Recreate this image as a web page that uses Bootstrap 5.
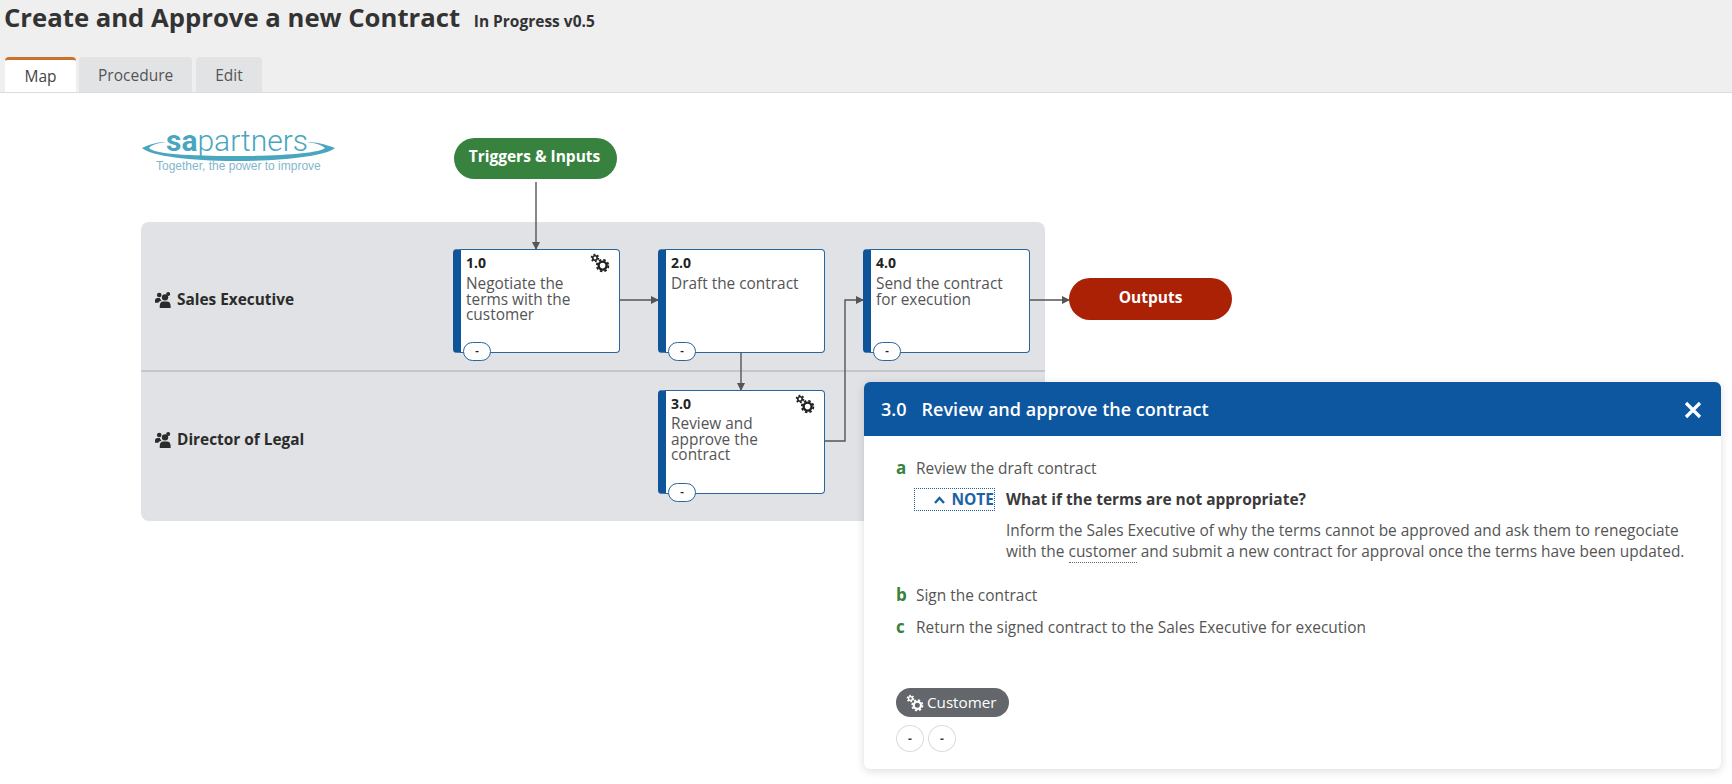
<!DOCTYPE html>
<html lang="en">
<head>
    <meta charset="UTF-8">
    <meta name="viewport" content="width=device-width, initial-scale=1.0">
    <title>Create and Approve a new Contract</title>
    <link href="https://cdn.jsdelivr.net/npm/bootstrap@5.3.0/dist/css/bootstrap.min.css" rel="stylesheet">
    <style>
        body {
            font-family: "Open Sans", "Liberation Sans", sans-serif;
            color: #333;
            background: #fff;
            overflow: hidden;
        }
        .page-head {
            background: #efefef;
            height: 93px;
            border-bottom: 1px solid #dcdcdc;
            padding: 0 4px;
        }
        .page-title {
            font-size: 25.7px;
            font-weight: 700;
            line-height: 36px;
            margin: 0;
            color: #333;
        }
        .page-title small {
            font-size: 15.5px;
            font-weight: 700;
            line-height: 1;
            margin-left: 7px;
        }
        .map-tabs {
            margin-top: 21px;
            margin-left: 1px;
            gap: 3px;
            border: 0;
        }
        .map-tabs .nav-link {
            height: 35px;
            padding: 6px 19px;
            font-size: 15.5px;
            line-height: 24px;
            color: #555;
            background: #e2e3e5;
            border: 0;
            border-radius: 4px 4px 0 0;
            margin: 0;
        }
        .map-tabs .nav-link.active {
            background: #fff;
            color: #444;
            border-top: 3px solid #c8722c;
            padding: 4px 19.5px 0;
        }
        .map-tabs .nav-link.tab-edit {
            padding: 6px 19px;
            margin-left: 1px;
        }
        .map-canvas {
            position: relative;
            height: 691px;
        }
        .lane-wrap {
            position: absolute;
            left: 141px;
            top: 129px;
            width: 904px;
            height: 299px;
            background: #e0e2e5;
            border-radius: 8px;
        }
        .lane {
            height: 149px;
            padding-left: 14px;
            font-size: 15.4px;
            font-weight: 700;
            color: #2b2b2b;
        }
        .lane-one {
            height: 150px;
            border-bottom: 2px solid #c4c6c9;
            padding-top: 7px;
        }
        .lane-two {
            padding-bottom: 14px;
        }
        .lane-icon {
            width: 19px;
            height: 16px;
            margin-right: 3px;
        }
        .logo-box {
            position: absolute;
            left: 141px;
            top: 30px;
        }
        .logo-box svg {
            display: block;
        }
        .arrows {
            position: absolute;
            left: 0;
            top: 0;
            width: 1300px;
            height: 450px;
        }
        .term {
            position: absolute;
            display: flex;
            align-items: center;
            justify-content: center;
            color: #fff;
            font-size: 15.5px;
            font-weight: 700;
            border-radius: 21px;
        }
        .term-in {
            left: 454px;
            top: 45px;
            width: 163px;
            height: 41px;
            padding: 0 2px 4px 0;
            background: #37823f;
        }
        .term-out {
            left: 1069px;
            top: 185px;
            width: 163px;
            height: 42px;
            padding-bottom: 2px;
            background: #ab2105;
        }
        .step {
            position: absolute;
            width: 167px;
            height: 104px;
            background: #fff;
            border: 1.5px solid #2a659c;
            border-left: 8px solid #0e5499;
            border-radius: 4px;
            padding: 3px 0 0 5px;
            color: #555;
            font-size: 15.4px;
            line-height: 15.6px;
        }
        .step b {
            display: block;
            color: #222;
            font-size: 14px;
            line-height: 20px;
            margin-bottom: 3px;
        }
        .step-1 { left: 453px; top: 156px; }
        .step-2 { left: 658px; top: 156px; }
        .step-3 { left: 658px; top: 297px; }
        .step-3 b { margin-bottom: 2px; }
        .step-4 { left: 863px; top: 156px; }
        .step-gear {
            position: absolute;
            right: 9px;
            top: 3px;
            width: 20px;
            height: 20px;
            color: #1e1e1e;
        }
        .step-pill {
            position: absolute;
            left: 2px;
            bottom: -9px;
            width: 28px;
            height: 19px;
            border: 1.5px solid #2a659c;
            border-radius: 10px;
            background: #fff;
            color: #222;
            font-size: 11px;
            font-weight: 700;
            line-height: 14px;
            text-align: center;
        }
        .detail {
            position: absolute;
            left: 864px;
            top: 289px;
            width: 857px;
            height: 387px;
            border: 0;
            border-radius: 6px;
            box-shadow: 0 2px 10px rgba(0, 0, 0, .14);
        }
        .detail .card-header {
            height: 54px;
            background: #0d56a0;
            color: #fff;
            border: 0;
            border-radius: 6px 6px 0 0;
            padding: 1px 19px 0 17px;
            font-size: 18.05px;
            font-weight: 600;
        }
        .detail .card-header span {
            margin-right: 15px;
        }
        .detail .card-body {
            padding: 21px 32px 0;
            font-size: 15.45px;
            color: #555;
        }
        .act-row {
            line-height: 22px;
        }
        .act-row b {
            width: 20px;
            flex: none;
            color: #37823f;
            font-size: 17px;
            font-weight: 700;
        }
        .act-second {
            margin-top: 22px;
        }
        .act-third {
            margin-top: 10px;
        }
        .note-row {
            margin: 9px 0 0 18px;
        }
        .note-tag {
            width: 81px;
            height: 23px;
            border: 1px dotted #235f97;
            color: #1d61a5;
            font-size: 15.5px;
            font-weight: 700;
            line-height: 21px;
            text-align: right;
            white-space: nowrap;
            flex: none;
        }
        .note-tag svg {
            margin-right: 2px;
            vertical-align: 1px;
        }
        .note-text {
            margin-left: 11px;
        }
        .note-text h6 {
            margin: 0 0 9px;
            font-size: 15.5px;
            font-weight: 700;
            line-height: 23px;
            color: #3a3a3a;
        }
        .note-text p {
            margin: 0;
            line-height: 21px;
        }
        .term-link {
            border-bottom: 1px dotted #666;
        }
        .sys-pill {
            width: 113px;
            height: 29px;
            margin-top: 50px;
            background: #63666a;
            color: #fff;
            font-size: 15.2px;
            font-weight: 400;
            padding: 0 0 0 10px;
        }
        .sys-pill svg {
            width: 18px;
            height: 18px;
            margin-right: 3px;
        }
        .mini-pill {
            width: 28px;
            height: 27px;
            border: 1px solid #dcdcdc;
            border-radius: 50%;
            font-size: 12px;
            font-weight: 700;
            line-height: 24px;
            text-align: center;
            background: #fff;
            color: #444;
            padding: 0;
        }
    </style>
</head>
<body>
    <svg width="0" height="0" class="position-absolute">
        <defs>
            <symbol id="gears" viewBox="0 0 20 20">
                <g fill="none" stroke="currentColor">
                    <circle cx="12.600" cy="12.600" r="4" stroke-width="2.400"/>
                    <circle cx="12.600" cy="12.600" r="5.800" stroke-width="1.800" stroke-dasharray="2.500 2.055"/>
                    <circle cx="5" cy="5" r="2.200" stroke-width="1.600"/>
                    <circle cx="5" cy="5" r="3.500" stroke-width="1.600" stroke-dasharray="1.800 1.860"/>
                </g>
            </symbol>
            <symbol id="people" viewBox="0 0 18 15">
                <circle cx="9.500" cy="5" r="3" fill="currentColor"/>
                <path d="M4.500 15v-2c0-2.500 1.600-4 3-4h4c1.800 0 3.300 1.500 3.300 4v2z" fill="currentColor"/>
                <circle cx="4" cy="2.800" r="2.200" fill="currentColor"/>
                <circle cx="12.500" cy="1.900" r="1.900" fill="currentColor"/>
                <path d="M0 10V8c0-1.400 1-2.300 2.200-2.300h2.400c.3 1.100.8 1.800 1.600 2.400C4.600 8.500 3.500 9 3.200 10z" fill="currentColor"/>
            </symbol>
        </defs>
    </svg>

    <div class="page-head">
        <h1 class="page-title">Create and Approve a new Contract <small>In Progress v0.5</small></h1>
        <ul class="nav nav-tabs map-tabs">
            <li class="nav-item"><a class="nav-link active" href="#">Map</a></li>
            <li class="nav-item"><a class="nav-link" href="#">Procedure</a></li>
            <li class="nav-item"><a class="nav-link tab-edit" href="#">Edit</a></li>
        </ul>
    </div>

    <div class="map-canvas">
        <div class="logo-box">
            <svg width="196" height="54" viewBox="0 0 196 54">
                <text x="25" y="28" font-family="Roboto" font-size="30" font-weight="300" fill="#4aa6bf"><tspan font-weight="700">sa</tspan><tspan>partners</tspan></text>
                <path d="M1 25c10-5 18-6 24-6-8 1-15 3-17 6 5 6 40 8 86 8 48 0 85-3 90-8-3-3-10-5-18-6 9 0 17 2 28 6-9 8-52 13-100 13C49 38 10 33 1 25z" fill="#4aa6bf"/>
                <text x="15" y="47" font-family="Liberation Sans" font-size="12" fill="#84b7cd">Together, the power to improve</text>
            </svg>
        </div>

        <div class="lane-wrap">
            <div class="lane lane-one d-flex align-items-center">
                <svg class="lane-icon"><use href="#people"/></svg>Sales Executive
            </div>
            <div class="lane lane-two d-flex align-items-center">
                <svg class="lane-icon"><use href="#people"/></svg>Director of Legal
            </div>
        </div>

        <svg class="arrows" viewBox="0 0 1300 450">
            <defs>
                <marker id="head" markerWidth="8" markerHeight="8" refX="7" refY="4" orient="auto" markerUnits="userSpaceOnUse">
                    <path d="M0 0L8 4L0 8z" fill="#555"/>
                </marker>
            </defs>
            <g fill="none" stroke="#555" stroke-width="1.4">
                <path d="M536 89V156" marker-end="url(#head)"/>
                <path d="M620 207H658" marker-end="url(#head)"/>
                <path d="M741 260V297" marker-end="url(#head)"/>
                <path d="M825 348H845V207H863" marker-end="url(#head)"/>
                <path d="M1030 207H1069" marker-end="url(#head)"/>
            </g>
        </svg>

        <div class="term term-in">Triggers &amp; Inputs</div>
        <div class="term term-out">Outputs</div>

        <div class="step step-1">
            <b>1.0</b>Negotiate the<br>terms with the<br>customer
            <svg class="step-gear"><use href="#gears"/></svg>
            <div class="step-pill">-</div>
        </div>
        <div class="step step-2">
            <b>2.0</b>Draft the contract
            <div class="step-pill">-</div>
        </div>
        <div class="step step-3">
            <b>3.0</b>Review and<br>approve the<br>contract
            <svg class="step-gear"><use href="#gears"/></svg>
            <div class="step-pill">-</div>
        </div>
        <div class="step step-4">
            <b>4.0</b>Send the contract<br>for execution
            <div class="step-pill">-</div>
        </div>

        <div class="card detail">
            <div class="card-header d-flex align-items-center">
                <span>3.0</span>Review and approve the contract
                <svg class="ms-auto" width="18" height="18" viewBox="0 0 18 18"><path d="M2 2L16 16M16 2L2 16" stroke="#fff" stroke-width="3.200" fill="none"/></svg>
            </div>
            <div class="card-body">
                <div class="act-row d-flex"><b>a</b>Review the draft contract</div>
                <div class="note-row d-flex">
                    <div class="note-tag">
                        <svg width="11" height="8" viewBox="0 0 11 8"><path d="M1 7L5.500 2L10 7" stroke="#1d61a5" stroke-width="2.400" fill="none"/></svg>
                        NOTE
                    </div>
                    <div class="note-text">
                        <h6>What if the terms are not appropriate?</h6>
                        <p>Inform the Sales Executive of why the terms cannot be approved and ask them to renegociate<br>with the <span class="term-link">customer</span> and submit a new contract for approval once the terms have been updated.</p>
                    </div>
                </div>
                <div class="act-row act-second d-flex"><b>b</b>Sign the contract</div>
                <div class="act-row act-third d-flex"><b>c</b>Return the signed contract to the Sales Executive for execution</div>
                <div class="badge rounded-pill sys-pill d-flex align-items-center">
                    <svg><use href="#gears"/></svg>Customer
                </div>
                <div class="d-flex gap-1 mt-2">
                    <button class="mini-pill" type="button">-</button>
                    <button class="mini-pill" type="button">-</button>
                </div>
            </div>
        </div>
    </div>

    <script src="https://cdn.jsdelivr.net/npm/bootstrap@5.3.0/dist/js/bootstrap.bundle.min.js"></script>
</body>
</html>
